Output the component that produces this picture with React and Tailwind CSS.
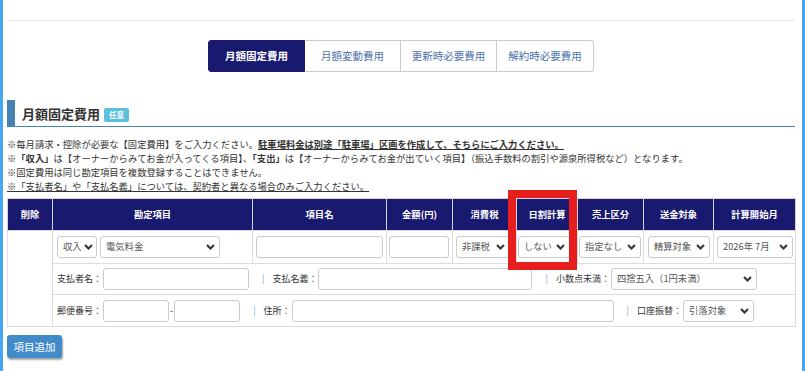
import React from 'react';

const Chevron = () => (
  <svg width="9" height="6" viewBox="0 0 9 6" className="shrink-0">
    <path d="M1 1l3.5 3.5L8 1" fill="none" stroke="#333" strokeWidth="2" />
  </svg>
);

const Select = ({ value, w }) => (
  <div className={`flex items-center justify-between gap-[2px] h-[22px] border border-[#ccc] rounded-[3px] bg-white pl-[5px] pr-[4px] text-[#555] ${w}`}>
    <span className="whitespace-nowrap">{value}</span>
    <Chevron />
  </div>
);

const Input = ({ w }) => (
  <div className={`h-[22px] border border-[#ccc] rounded-[3px] bg-white ${w}`} />
);

const Sep = () => <span className="text-[#6fa8dc] pl-[13px] pr-[8px]">|</span>;

const tabs = ['月額固定費用', '月額変動費用', '更新時必要費用', '解約時必要費用'];
const heads = ['削除', '勘定項目', '項目名', '金額(円)', '消費税', '日割計算', '売上区分', '送金対象', '計算開始月'];
const widths = [45, 200, 134, 66, 64, 61, 66, 70, 82];

export default function App() {
  return (
    <div className="relative h-[371px] overflow-hidden bg-white border-l-[3px] border-r-[3px] border-[#45a8ee] pl-[4px] pr-[7px] font-['Noto_Sans_CJK_JP','Noto_Sans',sans-serif] text-[#333]">
      <div className="h-[21px] border-b border-[#e6e6e6]" />

      {/* tabs */}
      <div className="mt-[19px] flex justify-center">
        {tabs.map((t, i) => (
          <div
            key={t}
            className={
              i === 0
                ? 'w-[97px] h-[32px] flex items-center justify-center bg-[#191970] text-white font-bold text-[10.5px] rounded-l-[3px] border border-[#191970]'
                : i === 3
                ? 'w-[97px] h-[32px] flex items-center justify-center text-[#4d72ab] text-[10.5px] border border-l-0 border-[#ccc] rounded-r-[3px]'
                : 'w-[96px] h-[32px] flex items-center justify-center text-[#4d72ab] text-[10.5px] border border-l-0 border-[#ccc]'
            }
          >
            {t}
          </div>
        ))}
      </div>

      {/* section title */}
      <div className="mt-[28px] h-[27px] border-l-[8px] border-b border-[#4682b4] flex items-center pl-[7px]">
        <span className="text-[13px] font-bold leading-none">月額固定費用</span>
        <span className="ml-[4px] mt-[3px] w-[25px] h-[14px] rounded-[2px] bg-[#5bc0de] text-white text-[7.5px] font-bold flex items-center justify-center">任意</span>
      </div>

      {/* notes */}
      <div className="mt-[10px] text-[9.3px] leading-[14px]">
        <p>
          ※毎月請求・控除が必要な【固定費用】をご入力ください。
          <span className="font-bold underline">駐車場料金は別途「駐車場」区画を作成して、そちらにご入力ください。</span>
        </p>
        <p>
          ※<span className="font-bold">「収入」</span>は【オーナーからみてお金が入ってくる項目】、<span className="font-bold">「支出」</span>は【オーナーからみてお金が出ていく項目】（振込手数料の割引や源泉所得税など）となります。
        </p>
        <p>※固定費用は同じ勘定項目を複数登録することはできません。</p>
        <p className="underline">※「支払者名」や「支払名義」については、契約者と異なる場合のみご入力ください。</p>
      </div>

      {/* table */}
      <table className="mt-[5px] w-[788px] table-fixed border-collapse text-[9.3px]">
        <colgroup>
          {widths.map((w, i) => (
            <col key={i} style={{ width: w }} />
          ))}
        </colgroup>
        <thead>
          <tr className="h-[32px] bg-[#191970] text-white">
            {heads.map((h) => (
              <th key={h} className="border border-[#d4d4d4] font-bold text-center">{h}</th>
            ))}
          </tr>
        </thead>
        <tbody>
          <tr className="h-[33px]">
            <td rowSpan={3} className="border border-[#ddd]" />
            <td className="border border-[#ddd] pl-[4px]">
              <div className="flex gap-[3px]">
                <Select value="収入" w="w-[40px]" />
                <Select value="電気料金" w="w-[120px]" />
              </div>
            </td>
            <td className="border border-[#ddd] px-[3px]"><Input w="w-[127px]" /></td>
            <td className="border border-[#ddd] px-[2px]"><Input w="w-[60px]" /></td>
            <td className="border border-[#ddd] pl-[3px]"><Select value="非課税" w="w-[54px]" /></td>
            <td className="border border-[#ddd] pl-[1px]"><Select value="しない" w="w-[52px]" /></td>
            <td className="border border-[#ddd] pl-[1px]"><Select value="指定なし" w="w-[62px]" /></td>
            <td className="border border-[#ddd] pl-[4px]"><Select value="精算対象" w="w-[62px]" /></td>
            <td className="border border-[#ddd] pl-[3px]"><Select value="2026年 7月" w="w-[76px]" /></td>
          </tr>
          <tr className="h-[31px]">
            <td colSpan={8} className="border border-[#ddd] pl-[4px] text-[9px]">
              <div className="flex items-center">
                <span>支払者名：</span>
                <Input w="w-[146px] ml-[1px]" />
                <Sep />
                <span>支払名義：</span>
                <Input w="w-[214px] ml-[1px]" />
                <Sep />
                <span>小数点未満：</span>
                <Select value="四捨五入（1円未満）" w="w-[146px] ml-[1px] text-[9.3px]" />
              </div>
            </td>
          </tr>
          <tr className="h-[32px]">
            <td colSpan={8} className="border border-[#ddd] pl-[4px] text-[9px]">
              <div className="flex items-center">
                <span>郵便番号：</span>
                <Input w="w-[66px] ml-[1px]" />
                <span className="px-[1px]">-</span>
                <Input w="w-[66px]" />
                <Sep />
                <span>住所：</span>
                <Input w="w-[322px] ml-[1px]" />
                <Sep />
                <span>口座振替：</span>
                <Select value="引落対象" w="w-[71px] ml-[1px] text-[9.3px]" />
              </div>
            </td>
          </tr>
        </tbody>
      </table>

      <button className="mt-[8px] w-[55px] h-[23px] rounded-[3px] bg-[#428bca] text-white text-[10.5px] shadow-[1px_2px_2px_rgba(0,0,0,0.35)]">
        項目追加
      </button>

      {/* annotation */}
      <div className="absolute left-[505px] top-[190px] w-[69px] h-[80px] border-[8px] border-[#e61e1e]" />
    </div>
  );
}
